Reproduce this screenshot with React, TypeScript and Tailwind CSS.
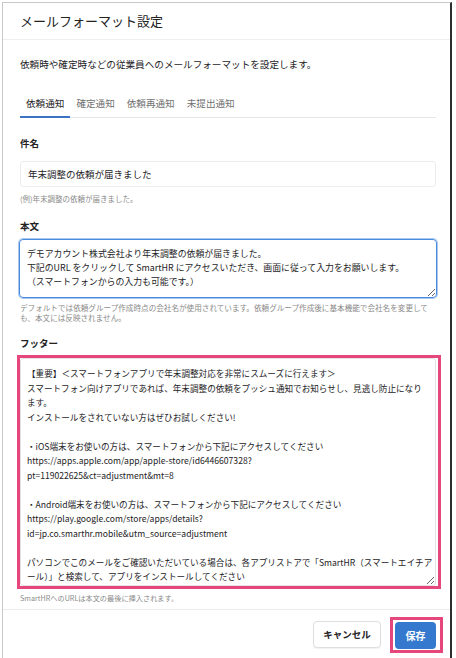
import { useState } from "react";

const BODY_TEXT = `デモアカウント株式会社より年末調整の依頼が届きました。
下記のURL をクリックして SmartHR にアクセスいただき、画面に従って入力をお願いします。
（スマートフォンからの入力も可能です。）`;

const FOOTER_TEXT = `【重要】＜スマートフォンアプリで年末調整対応を非常にスムーズに行えます＞
スマートフォン向けアプリであれば、年末調整の依頼をプッシュ通知でお知らせし、見逃し防止になり
ます。
インストールをされていない方はぜひお試しください!

・iOS端末をお使いの方は、スマートフォンから下記にアクセスしてください
https://apps.apple.com/app/apple-store/id6446607328?
pt=119022625&ct=adjustment&mt=8

・Android端末をお使いの方は、スマートフォンから下記にアクセスしてください
https://play.google.com/store/apps/details?
id=jp.co.smarthr.mobile&utm_source=adjustment

パソコンでこのメールをご確認いただいている場合は、各アプリストアで「SmartHR（スマートエイチア
ール）」と検索して、アプリをインストールしてください`;

const TABS = ["依頼通知", "確定通知", "依頼再通知", "未提出通知"];

export default function App() {
  const [activeTab, setActiveTab] = useState(0);
  const [subject, setSubject] = useState("年末調整の依頼が届きました");
  const [body, setBody] = useState(BODY_TEXT);
  const [footer, setFooter] = useState(FOOTER_TEXT);

  return (
    <div className="w-[456px] h-[658px] bg-white overflow-hidden pt-[2px] pl-[2px] font-['Noto_Sans_CJK_JP',sans-serif] text-[#23221e]">
      <div className="w-[450px] h-[656px] flex flex-col border-l border-t border-[#c9c9c9] border-r-2 border-r-[#2e2e2e] bg-white">
        {/* header */}
        <div className="h-[37px] shrink-0 flex items-center pl-[17px] border-b border-[#eeeeee]">
          <h2 className="text-[13px] leading-[18px]">メールフォーマット設定</h2>
        </div>

        {/* body */}
        <div className="flex-1 pl-[17px] pr-[14px] pb-[4px]">
          <p className="mt-[17px] text-[9.6px] leading-[14px]">
            依頼時や確定時などの従業員へのメールフォーマットを設定します。
          </p>

          <div className="mt-[25px] flex border-b border-[#e6e6e6]">
            {TABS.map((tab, i) => (
              <button
                key={tab}
                onClick={() => setActiveTab(i)}
                className={
                  i === activeTab
                    ? "px-[6px] pb-[6px] text-[9.6px] leading-[14px] border-b-2 border-[#3a73c4] -mb-px"
                    : "px-[6px] pb-[6px] text-[9.6px] leading-[14px] border-b-2 border-transparent -mb-px text-[#707070]"
                }
              >
                {tab}
              </button>
            ))}
          </div>

          <div className="mt-[18px] text-[9.5px] leading-[14px] font-bold">件名</div>
          <input
            value={subject}
            onChange={(e) => setSubject(e.target.value)}
            className="mt-[11px] w-[416px] h-[26px] px-[7px] text-[9.5px] border border-[#ececec] rounded-[3px] focus:outline-none"
          />
          <div className="mt-[6px] text-[7.5px] leading-[12px] text-[#8a8a8a]">
            (例)年末調整の依頼が届きました。
          </div>

          <div className="mt-[14px] text-[9.5px] leading-[14px] font-bold">本文</div>
          <textarea
            value={body}
            wrap="off"
            onChange={(e) => setBody(e.target.value)}
            className="mt-[6px] block w-[418px] -ml-px h-[59px] px-[7px] py-[7px] text-[8.9px] leading-[14px] border border-[#4a8bdb] shadow-[0_0_0_1px_#a9c8ef] rounded-[4px] overflow-hidden resize-y focus:outline-none"
          />
          <div className="mt-[5px] text-[7.6px] leading-[10px] text-[#8a8a8a] whitespace-nowrap">
            デフォルトでは依頼グループ作成時点の会社名が使用されています。依頼グループ作成後に基本機能で会社名を変更して
            <br />
            も、本文には反映されません。
          </div>

          <div className="mt-[13px] text-[9.5px] leading-[14px] font-bold">フッター</div>
          <div className="relative mt-[8px]">
            <textarea
              value={footer}
              wrap="off"
              onChange={(e) => setFooter(e.target.value)}
              className="block w-[416px] h-[228px] px-[6px] py-[7px] text-[8.6px] leading-[14.5px] border border-[#e2e2e2] rounded-[3px] overflow-hidden resize-y focus:outline-none"
            />
            <div className="pointer-events-none absolute -top-[3px] -left-[3px] -right-[5px] -bottom-[3px] border-[3px] border-[#e5467c]" />
          </div>
          <div className="mt-[6px] text-[7.2px] leading-[12px] text-[#8a8a8a]">
            SmartHRへのURLは本文の最後に挿入されます。
          </div>
        </div>

        {/* footer */}
        <div className="shrink-0 border-t border-[#ececec] pt-[11px] pb-[9px] pr-[14px] flex justify-end gap-[14px]">
          <button className="w-[68px] h-[27px] text-[9.5px] font-bold border border-[#dedede] rounded-[4px] bg-white shadow-[0_1px_1px_rgba(0,0,0,0.05)]">
            キャンセル
          </button>
          <div className="relative">
            <button className="w-[41px] h-[27px] text-[10px] font-bold text-white bg-[#3479cd] rounded-[4px]">
              保存
            </button>
            <div className="pointer-events-none absolute -top-[4px] -left-[5px] -right-[7px] -bottom-[4px] border-[3px] border-[#e5467c]" />
          </div>
        </div>
      </div>
    </div>
  );
}
